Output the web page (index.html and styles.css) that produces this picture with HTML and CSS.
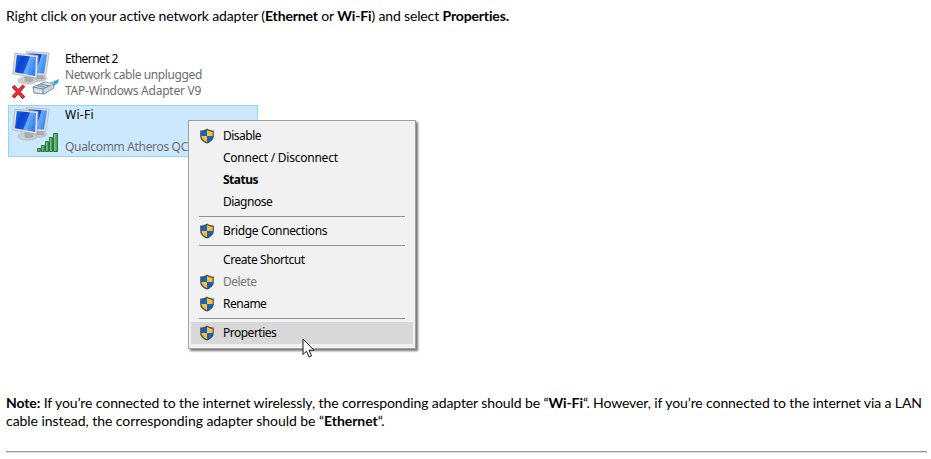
FILE: index.html
```
<!DOCTYPE html>
<html lang="en">
<head>
<meta charset="utf-8">
<title>Network adapter properties</title>
<link rel="stylesheet" href="styles.css">
</head>
<body>
<svg width="0" height="0" class="defs" aria-hidden="true">
  <defs>
    <linearGradient id="screen" x1="0" y1=".2" x2="1" y2=".6">
      <stop offset="0" stop-color="#1c70ee"/><stop offset=".3" stop-color="#0b43cf"/><stop offset=".55" stop-color="#1554dc"/><stop offset=".6" stop-color="#68acfb"/><stop offset="1" stop-color="#2f80f0"/>
    </linearGradient>
    <linearGradient id="bars" x1="0" x2="1"><stop offset="0" stop-color="#8fd09b"/><stop offset="1" stop-color="#36934b"/></linearGradient>
    <symbol id="computers" viewBox="0 0 38 34">
      <ellipse cx="27" cy="27.500" rx="8" ry="3.500" fill="#c3c5c6"/>
      <path d="M25 22h6l1 6h-7z" fill="#a5a8aa"/>
      <path d="M14.500 .5 37.300 2 33.700 24.500 17 24z" fill="#dddedd" stroke="#b0b3b3" stroke-width=".7"/>
      <path d="M16.500 2.300 35 3.600 31.900 22.500 18 22z" fill="url(#screen)"/>
      <ellipse cx="15.500" cy="29.500" rx="9.500" ry="3.700" fill="#cccecf" stroke="#abafb2" stroke-width=".6"/>
      <path d="M12.500 24h8l1 6c-2 1.500-7 1.500-9 0z" fill="#a9adb0"/>
      <path d="M3 2.200 26 4.500 24.800 27.300 .7 22.800z" fill="#e3e4e3" stroke="#a9acad" stroke-width=".8"/>
      <path d="M4.800 4.100 24 6.100 23 25 2.900 21.200z" fill="url(#screen)"/>
    </symbol>
    <symbol id="shield" viewBox="0 0 16 16">
      <path d="M8 .6C6 2.100 3.800 2.600 1.200 2.600v5.300c0 3.400 2.700 5.900 6.800 7.600 4.100-1.700 6.800-4.200 6.800-7.600V2.600C12.200 2.600 10 2.100 8 .6z" fill="#4a4c50"/>
      <path d="M8 1.900C6.200 3.200 4.300 3.600 2.400 3.700V8H8z" fill="#0868c8"/>
      <path d="M8 1.900c1.800 1.300 3.700 1.700 5.600 1.800V8H8z" fill="#ffbd36"/>
      <path d="M2.400 8H8v6.200C4.700 12.700 2.500 10.600 2.400 8z" fill="#ffbd36"/>
      <path d="M13.600 8H8v6.200c3.300-1.500 5.500-3.600 5.600-6.200z" fill="#0868c8"/>
    </symbol>
  </defs>
</svg>
<main class="page">
  <p class="intro">Right click on your active network adapter (<b>Ethernet</b> or <b>Wi-Fi</b>) and select <b>Properties.</b></p>
  <section class="network">
    <div class="adapter">
      <div class="picture">
        <svg class="computers"><use href="#computers"/></svg>
        <svg class="cross" viewBox="0 0 14 14"><path d="m2 2 10 11M12 1.500 2 12.500" stroke="#b80d15" stroke-width="3.400"/><path d="m2 2 9.500 10.300M11.700 1.800 2.300 12" stroke="#ee3037" stroke-width="2"/></svg>
        <svg class="plug" viewBox="0 0 28 17">
          <path d="m16 6 4-2 7-3-1 4-6 4z" fill="#35a9dc"/>
          <path d="m1 9 12-5 8 2 1 4-10 6-10-1z" fill="#ccd7e3" stroke="#71869a" stroke-width=".9"/>
          <path d="m1 9 10 2 10-5M11 11v5M5 7.500l9 2M8 6l9 2" fill="none" stroke="#657e98" stroke-width=".9"/>
          <path d="m3 11 1 3m2-2 .5 2.500M8.500 12v3" stroke="#f8fcff"/>
          <path d="m13 5 6 1.500 3-2" fill="none" stroke="#eef8ff"/>
        </svg>
      </div>
      <div class="details"><span class="name">Ethernet 2</span><span class="cable">Network cable unplugged</span><span class="tap">TAP-Windows Adapter V9</span></div>
    </div>
    <div class="adapter selected">
      <div class="picture">
        <svg class="computers"><use href="#computers"/></svg>
        <svg class="signal" viewBox="0 0 22 19"><g fill="url(#bars)" stroke="#277b3c"><path d="M.5 15.500h3v3h-3z"/><path d="M4.500 12.500h3v6h-3z"/><path d="M8.500 8.500h3v10h-3z"/><path d="M12.500 4.500h3v14h-3z"/><path d="M16.500 .5h4v18h-4z"/></g></svg>
      </div>
      <div class="details"><span class="wifi">Wi-Fi</span><span></span><span class="qualcomm">Qualcomm Atheros QC</span></div>
    </div>
    <div class="menu">
      <div class="item"><svg><use href="#shield"/></svg><span class="disable">Disable</span></div>
      <div class="item"><span class="connect">Connect / Disconnect</span></div>
      <div class="item"><b class="status">Status</b></div>
      <div class="item"><span class="diagnose">Diagnose</span></div>
      <hr>
      <div class="item"><svg><use href="#shield"/></svg><span class="bridge">Bridge Connections</span></div>
      <hr>
      <div class="item"><span class="create">Create Shortcut</span></div>
      <div class="item disabled"><svg><use href="#shield"/></svg><span class="delete">Delete</span></div>
      <div class="item"><svg><use href="#shield"/></svg><span class="rename">Rename</span></div>
      <hr>
      <div class="item active"><svg><use href="#shield"/></svg><span class="properties">Properties</span></div>
      <svg class="cursor" viewBox="0 0 13 20"><path d="M1 1v15.500l3.500-3.300 2.600 5.800 2.500-1.100L7 12.200h4.900z" fill="#fff" stroke="#15152b"/></svg>
    </div>
  </section>
  <p class="note"><span class="line first"><b>Note:</b> If you’re connected to the internet wirelessly, the corresponding adapter should be “<b>Wi-Fi</b>“. However, if you’re connected to the internet via a LAN</span> <span class="line second">cable instead, the corresponding adapter should be “<b>Ethernet</b>“.</span></p>
  <hr class="rule">
</main>
</body>
</html>
```
FILE: styles.css
```
* { box-sizing: border-box; }
body { margin: 0; background: #fff; color: #000; overflow: hidden; }
.defs { position: absolute; }
.page { height: 459px; padding: 7px 4px 0 6px; font: 14px/18px Lato, sans-serif; }
p { margin: 0; white-space: nowrap; }
.intro { height: 18px; letter-spacing: -.145px; }
.network { position: relative; height: 369px; padding: 24px 0 0 2px; font: 12px/16px "Noto Sans", sans-serif; }
.adapter { display: flex; width: 250px; height: 52px; margin-bottom: 4px; border: 1px solid transparent; }
.selected { background: #cce8ff; border-color: #99d1ff; }
.picture { position: relative; width: 56px; }
.computers { position: absolute; left: 3px; top: 1px; width: 38px; height: 34px; }
.cross { position: absolute; left: 2px; top: 34px; width: 15px; height: 15px; }
.plug { position: absolute; left: 23px; top: 28px; width: 28px; height: 17px; }
.signal { position: absolute; left: 28px; top: 27px; width: 22px; height: 19px; }
.details { display: grid; grid-template-rows: repeat(3, 16px); height: 48px; white-space: nowrap; color: #6d6d6d; margin-top: 1px; }
.details span { justify-self: start; }
.details .name, .details .wifi { color: #000; }
.name { letter-spacing: -.6px; }
.wifi { letter-spacing: .3px; }
.cable { letter-spacing: -.39px; }
.tap { letter-spacing: -.24px; }
.qualcomm { letter-spacing: -.33px; }
.menu { position: absolute; left: 182px; top: 95px; width: 228px; height: 229px; padding: 4px 2px 0; background: #f1f1f1; border: 1px solid #a0a0a0; box-shadow: 2px 2px 2px #777; }
.item { position: relative; display: flex; align-items: center; height: 22px; padding-left: 32px; white-space: nowrap; letter-spacing: -.5px; }
.connect { letter-spacing: -.24px; }
.bridge { letter-spacing: -.36px; }
.create { letter-spacing: -.42px; }
.item svg { position: absolute; left: 8px; top: 3px; width: 16px; height: 16px; }
.active { background: #d8d8d8; }
.disabled { color: #777; }
.menu hr { height: 1px; margin: 3px 8px; border: 0; background: #919191; }
.menu .cursor { position: absolute; left: 113px; top: 217px; width: 13px; height: 20px; }
.line { display: block; width: max-content; }
.first { letter-spacing: -.1px; }
.second { letter-spacing: -.05px; }
.rule { margin: 21px 0 0; height: 2px; border: 0; border-top: 1px solid #999; border-bottom: 1px solid #ddd; }
```
